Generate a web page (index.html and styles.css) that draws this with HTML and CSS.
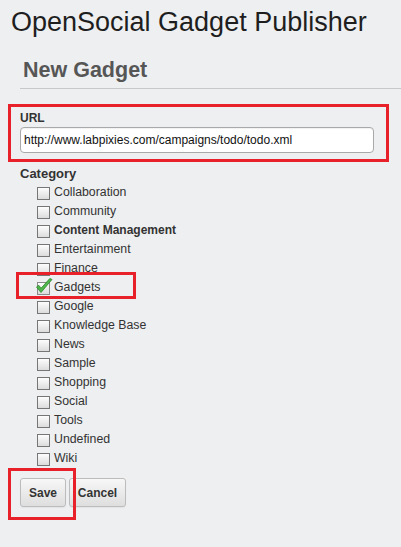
FILE: index.html
```html
<!DOCTYPE html>
<html>
<head>
<meta charset="utf-8">
<link rel="stylesheet" href="styles.css">
</head>
<body>
<div class="page">
  <h1 class="title">OpenSocial Gadget Publisher</h1>
  <div class="content">
    <h2 class="subtitle">New Gadget</h2>
    <form class="form">
      <label class="field-label">URL</label>
      <div class="url-input">http://www.labpixies.com/campaigns/todo/todo.xml</div>
      <div class="cat-label">Category</div>
      <ul class="cats">
        <li class="cat"><span class="cb"></span><span>Collaboration</span></li>
        <li class="cat"><span class="cb"></span><span>Community</span></li>
        <li class="cat"><span class="cb"></span><span class="bold">Content Management</span></li>
        <li class="cat"><span class="cb"></span><span>Entertainment</span></li>
        <li class="cat"><span class="cb"></span><span>Finance</span></li>
        <li class="cat"><span class="cb checked"><svg class="check" width="18" height="18" viewBox="0 0 18 18"><path d="M1.5 10 L6 15.5 L17 2.5 L14.8 1.5 L6 11.3 L3.8 8.3 Z" fill="#4fb54c" stroke="#2c8a2a" stroke-width="0.8" stroke-linejoin="round"/></svg></span><span>Gadgets</span></li>
        <li class="cat"><span class="cb"></span><span>Google</span></li>
        <li class="cat"><span class="cb"></span><span>Knowledge Base</span></li>
        <li class="cat"><span class="cb"></span><span>News</span></li>
        <li class="cat"><span class="cb"></span><span>Sample</span></li>
        <li class="cat"><span class="cb"></span><span>Shopping</span></li>
        <li class="cat"><span class="cb"></span><span>Social</span></li>
        <li class="cat"><span class="cb"></span><span>Tools</span></li>
        <li class="cat"><span class="cb"></span><span>Undefined</span></li>
        <li class="cat"><span class="cb"></span><span>Wiki</span></li>
      </ul>
      <div class="buttons">
        <button type="button" class="btn">Save</button>
        <button type="button" class="btn">Cancel</button>
      </div>
    </form>
  </div>
  <div class="mark mark-url"></div>
  <div class="mark mark-gadgets"></div>
  <div class="mark mark-save"></div>
</div>
</body>
</html>
```

FILE: styles.css
```css
html, body {
  margin: 0;
  padding: 0;
  background: #eeeff1;
}
body {
  font-family: "Liberation Sans", Arial, sans-serif;
  color: #222;
  width: 401px;
  height: 547px;
  overflow: hidden;
}
.page {
  position: relative;
  height: 547px;
}
.title {
  margin: 0;
  padding: 7px 0 0 11px;
  font-size: 27px;
  line-height: 31px;
  font-weight: normal;
  color: #1e1e1e;
}
.content {
  margin-left: 20px;
}
.subtitle {
  margin: 20px 0 0 0;
  padding: 0 0 6px 3px;
  font-size: 21.5px;
  line-height: 24px;
  font-weight: bold;
  color: #565656;
  border-bottom: 1px solid #c8c8c8;
}
.form {
  margin: 0;
  padding-top: 22px;
}
.field-label {
  display: block;
  font-size: 12px;
  line-height: 14px;
  font-weight: bold;
  color: #333;
}
.url-input {
  margin-top: 2px;
  box-sizing: border-box;
  width: 354px;
  height: 26px;
  border: 1px solid #a9a9a9;
  border-radius: 4px;
  background: #fff;
  padding: 0 0 0 3px;
  font-size: 12px;
  line-height: 24px;
  color: #111;
  box-shadow: inset 0 1px 1px rgba(0,0,0,0.06);
  white-space: nowrap;
}
.cat-label {
  margin-top: 13px;
  font-size: 13px;
  line-height: 15px;
  font-weight: bold;
  color: #333;
}
.cats {
  list-style: none;
  margin: 2px 0 0 0;
  padding: 0 0 0 17px;
}
.cat {
  display: flex;
  align-items: center;
  height: 19px;
  font-size: 12.3px;
  line-height: 19px;
  color: #333;
}
.cb {
  position: relative;
  box-sizing: border-box;
  width: 13px;
  height: 13px;
  margin: 1px 4px 0 0;
  border: 1px solid #767676;
  background: linear-gradient(#fdfdfd, #dcdcdc);
  flex: none;
}
.cb.checked {
  border-color: #8a8a8a;
}
.check {
  position: absolute;
  left: -3px;
  top: -6px;
}
.bold {
  font-weight: bold;
  font-size: 12px;
}
.buttons {
  display: flex;
  gap: 3px;
  margin-top: 10px;
}
.btn {
  box-sizing: border-box;
  height: 29px;
  padding: 0 6px;
  border: 1px solid #bcbcbc;
  border-radius: 3px;
  background: linear-gradient(#f7f7f7, #dedede);
  font-family: "Liberation Sans", Arial, sans-serif;
  font-size: 12px;
  font-weight: bold;
  color: #333;
  box-shadow: 0 1px 1px rgba(0,0,0,0.05);
}
.btn:first-child {
  width: 46px;
}
.btn:last-child {
  width: 57px;
}
.mark {
  position: absolute;
  box-sizing: border-box;
  border: 3px solid #e8202a;
}
.mark-url {
  left: 8px;
  top: 104px;
  width: 381px;
  height: 58px;
}
.mark-gadgets {
  left: 16px;
  top: 272px;
  width: 120px;
  height: 27px;
}
.mark-save {
  left: 8px;
  top: 468px;
  width: 68px;
  height: 52px;
}
```
